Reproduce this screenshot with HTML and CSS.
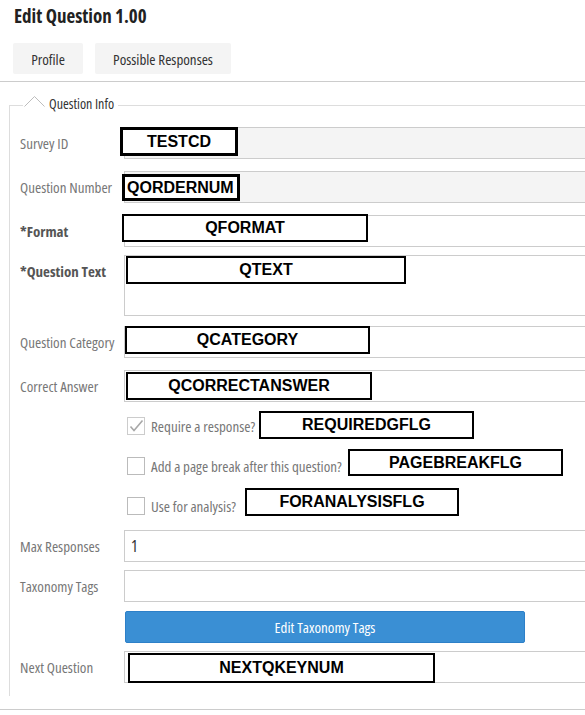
FILE: index.html
```html
<!DOCTYPE html>
<html>
<head>
<meta charset="utf-8">
<link rel="stylesheet" href="styles.css">
</head>
<body>
<h1 class="title">Edit Question 1.00</h1>
<div class="tabs">
  <button class="tab tab-profile">Profile</button>
  <button class="tab tab-responses">Possible Responses</button>
</div>
<fieldset class="info">
  <legend class="legend"><svg class="chev" width="21" height="12" viewBox="0 0 21 12"><polyline points="0.5,11.5 10.5,1.5 20.5,11.5" fill="none" stroke="#bdbdbd" stroke-width="1"/></svg><span>Question Info</span></legend>

  <div class="row mb12">
    <div class="lbl">Survey ID</div>
    <div class="field"><div class="input ro"></div><span class="tag t-testcd">TESTCD</span></div>
  </div>
  <div class="row mb12">
    <div class="lbl">Question Number</div>
    <div class="field"><div class="input ro"></div><span class="tag t-qorder">QORDERNUM</span></div>
  </div>
  <div class="row mb8">
    <div class="lbl req">*Format</div>
    <div class="field"><div class="input"></div><span class="tag thin t-qformat">QFORMAT</span></div>
  </div>
  <div class="row mb10">
    <div class="lbl req">*Question Text</div>
    <div class="field"><div class="input area"></div><span class="tag thin t-qtext">QTEXT</span></div>
  </div>
  <div class="row mb12">
    <div class="lbl">Question Category</div>
    <div class="field"><div class="input"></div><span class="tag thin t-qcat">QCATEGORY</span></div>
  </div>
  <div class="row mb4">
    <div class="lbl">Correct Answer</div>
    <div class="field"><div class="input"></div><span class="tag thin t-qcorrect">QCORRECTANSWER</span></div>
  </div>

  <div class="check">
    <span class="box checked"><svg width="16" height="16" viewBox="0 0 16 16"><polyline points="2.5,8.5 6,12.5 14.5,2.5" fill="none" stroke="#a8a8a8" stroke-width="1.6"/></svg></span>
    <span class="ctext">Require a response?</span>
    <span class="tag thin t-req">REQUIREDGFLG</span>
  </div>
  <div class="check">
    <span class="box"></span>
    <span class="ctext">Add a page break after this question?</span>
    <span class="tag thin t-page">PAGEBREAKFLG</span>
  </div>
  <div class="check mb4">
    <span class="box"></span>
    <span class="ctext">Use for analysis?</span>
    <span class="tag thin t-analysis">FORANALYSISFLG</span>
  </div>

  <div class="row mb8">
    <div class="lbl">Max Responses</div>
    <div class="field"><div class="input value">1</div></div>
  </div>
  <div class="row mb9">
    <div class="lbl">Taxonomy Tags</div>
    <div class="field"><div class="input"></div></div>
  </div>
  <div class="btnrow mb8">
    <button class="btn">Edit Taxonomy Tags</button>
  </div>
  <div class="row">
    <div class="lbl">Next Question</div>
    <div class="field"><div class="input"></div><span class="tag thin t-next">NEXTQKEYNUM</span></div>
  </div>
</fieldset>
<div class="footline"></div>
</body>
</html>
```

FILE: styles.css
```css
* { box-sizing: border-box; }
html, body { margin: 0; padding: 0; overflow: hidden; background: #fff; }
body {
  width: 585px;
  height: 715px;
  font-family: "Open Sans", "Roboto Condensed", "Liberation Sans", sans-serif;
  font-stretch: 75%;
  font-size: 15px;
  color: #777;
}
.title {
  margin: 0;
  padding: 4px 0 0 14px;
  height: 43px;
  font-size: 19px;
  line-height: 24px;
  font-weight: bold;
  color: #222;
}
.tabs {
  display: flex;
  gap: 12px;
  padding: 0 0 7px 13px;
  border-bottom: 1px solid #ccc;
}
.tab {
  height: 31px;
  padding: 0;
  border: none;
  border-radius: 2px;
  background: #f4f4f4;
  font: inherit;
  font-stretch: 75%;
  color: #333;
  text-align: center;
}
.tab-profile { width: 70px; }
.tab-responses { width: 136px; }

.info {
  margin: 13px -20px 0 9px;
  padding: 12px 0 13px 10px;
  border: 1px solid #ddd;
  border-right: none;
  border-bottom: none;
  min-width: 0;
}
.legend {
  margin-left: 3px;
  padding: 0 4px 0 1px;
  height: 20px;
  display: flex;
  align-items: center;
  gap: 4px;
  color: #333;
  font-size: 14px;
  line-height: 20px;
}
.legend span { margin-top: -2px; }
.chev { display: block; margin-top: -9px; }

.row { display: flex; align-items: flex-start; }
.mb4 { margin-bottom: 4px; }
.mb8 { margin-bottom: 8px; }
.mb9 { margin-bottom: 9px; }
.mb10 { margin-bottom: 10px; }
.mb12 { margin-bottom: 12px; }
.lbl {
  width: 104px;
  flex: none;
  line-height: 32px;
  white-space: nowrap;
}
.lbl.req { font-weight: bold; color: #555; }
.field { position: relative; flex: 1; }
.input {
  height: 32px;
  border: 1px solid #ccc;
  background: #fff;
}
.input.ro { background: #f4f4f4; }
.input.area { height: 61px; }
.input.value { padding-left: 6px; line-height: 30px; color: #333; font-size: 16px; }

.tag {
  position: absolute;
  display: flex;
  align-items: center;
  justify-content: center;
  background: #fff;
  border: 3px solid #000;
  font-family: "Liberation Sans", Arial, sans-serif;
  font-stretch: normal;
  font-weight: bold;
  font-size: 16px;
  color: #000;
  white-space: nowrap;
}
.tag.thin { border-width: 2.5px; }
.t-testcd { left: -4px; top: 0; width: 118px; height: 29px; }
.t-qorder { left: -2px; top: 3px; width: 118px; height: 27px; justify-content: flex-start; padding-left: 2px; }
.t-qformat { left: -2px; top: -1px; width: 246px; height: 28px; }
.t-qtext { left: 2px; top: 1px; width: 280px; height: 28px; }
.t-qcat { left: 1px; top: 0; width: 245px; height: 28px; }
.t-qcorrect { left: 2px; top: 2px; width: 246px; height: 28px; }
.t-next { left: 4px; top: 2px; width: 307px; height: 30px; }

.check {
  position: relative;
  display: flex;
  align-items: center;
  height: 40px;
  padding-left: 107px;
}
.box {
  width: 18px;
  height: 18px;
  flex: none;
  border: 1px solid #bbb;
  background: #fff;
  margin-right: 6px;
  display: flex;
  align-items: center;
  justify-content: center;
}
.box.checked { border-color: #ccc; }
.ctext { white-space: nowrap; line-height: 20px; }
.t-req { left: 239px; top: 5px; width: 215px; height: 28px; }
.t-page { left: 328px; top: 3px; width: 215px; height: 27px; }
.t-analysis { left: 225px; top: 2px; width: 214px; height: 28px; }

.btnrow { padding-left: 105px; }
.btn {
  display: block;
  width: 400px;
  height: 32px;
  padding: 0;
  background: #3a8fd4;
  border: 1px solid #2d80c8;
  border-radius: 2px;
  color: #fff;
  font: inherit;
  font-stretch: 75%;
  font-size: 15px;
}
.footline {
  margin-top: 13px;
  border-top: 1px solid #ccc;
}
```
